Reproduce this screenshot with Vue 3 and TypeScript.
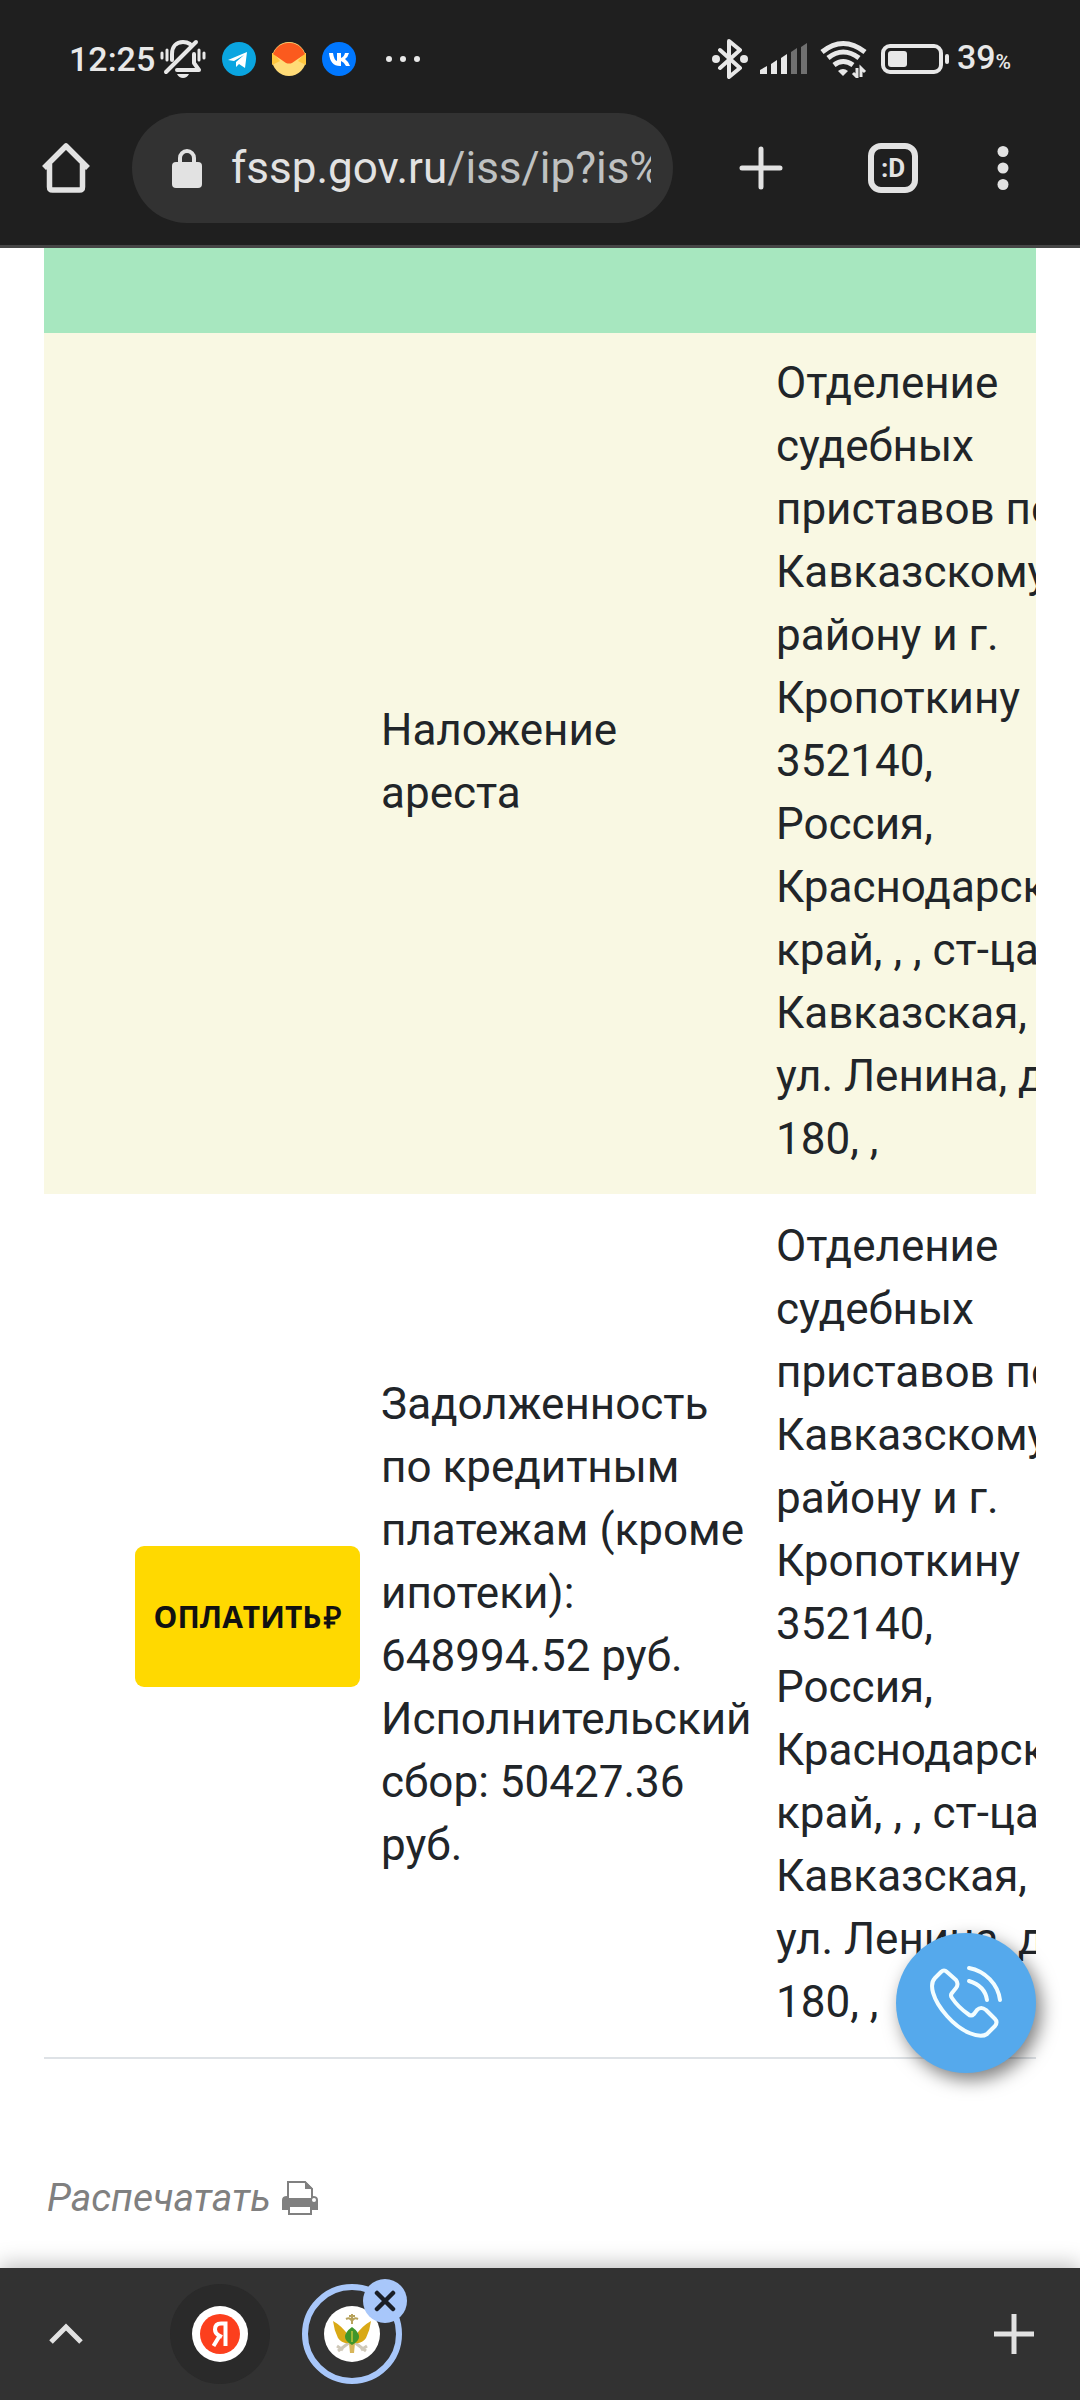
<script setup lang="ts">
interface Row {
  tone: string
  subject: string[]
  payable: boolean
}

const office: string[] = [
  'Отделение',
  'судебных',
  'приставов по',
  'Кавказскому',
  'району и г.',
  'Кропоткину',
  '352140,',
  'Россия,',
  'Краснодарский',
  'край, , , ст-ца',
  'Кавказская,',
  'ул. Ленина, д.',
  '180, ,',
]

const rows: Row[] = [
  { tone: 'cream', subject: ['Наложение', 'ареста'], payable: false },
  {
    tone: 'plain',
    subject: [
      'Задолженность',
      'по кредитным',
      'платежам (кроме',
      'ипотеки):',
      '648994.52 руб.',
      'Исполнительский',
      'сбор: 50427.36',
      'руб.',
    ],
    payable: true,
  },
]
</script>

<template>
  <div class="screen">
    <header class="top">
      <div class="status">
        <span class="clock">12:25</span>
        <svg class="bell" width="46" height="40" viewBox="0 0 46 40" fill="none" stroke="#e8e8e8" stroke-width="4" stroke-linecap="round">
          <path d="M6 33 36 3" />
          <path d="M12 21v-6C12 8 16 3 23 3q4 0 7 2" />
          <path d="M17 31h22l-5-7v-9" stroke-linejoin="round" />
          <path d="M2 14v5M7 11v10M39 11v10M44 14v5" stroke-width="3" />
          <path d="M17 35h12q-2 4-6 4t-6-4z" fill="#e8e8e8" stroke="none" />
        </svg>
        <svg class="app" width="34" height="34" viewBox="0 0 34 34">
          <circle cx="17" cy="17" r="17" fill="#0aa5e0" />
          <path d="M6 18 25 10l-2 16-6-4-3 3v-5l8-7-10 6z" fill="#fff" />
        </svg>
        <svg class="app" width="34" height="34" viewBox="0 0 34 34">
          <circle cx="17" cy="17" r="17" fill="#ffdb77" />
          <path d="M1 11 8 19 0 23V11zM33 11l-7 8 8 4V11z" fill="#ffc63e" />
          <path d="M1 12A17 17 0 0 1 33 12L20 21q-3 1-6 0z" fill="#fb5a1e" />
        </svg>
        <svg class="app" width="34" height="34" viewBox="0 0 34 34">
          <circle cx="17" cy="17" r="17" fill="#07f" />
          <path d="M7 11h4q1 7 4 8v-8h4v5q3-1 4-5h4q-1 4-4 6 3 2 5 7h-4q-2-4-5-5v5h-1Q8 24 7 11z" fill="#fff" />
        </svg>
        <svg class="more" width="36" height="8" viewBox="0 0 36 8" fill="#e8e8e8">
          <circle cx="4" cy="4" r="3" /><circle cx="18" cy="4" r="3" /><circle cx="32" cy="4" r="3" />
        </svg>
        <svg class="push" width="36" height="40" viewBox="0 0 36 40">
          <path d="m8 11 20 18-11 9V2l11 9L8 29" fill="none" stroke="#e8e8e8" stroke-width="4" stroke-linecap="round" stroke-linejoin="round" />
          <circle cx="4" cy="20" r="4" fill="#e8e8e8" /><circle cx="32" cy="20" r="4" fill="#e8e8e8" />
        </svg>
        <svg class="signal" width="48" height="32" viewBox="0 0 48 32">
          <path d="M0 27l7-4v8H0zM11 21l6-4v14h-6zM21 15l6-4v20h-6z" fill="#e8e8e8" />
          <path d="M31 9l6-4v26h-6zM41 4l6-4v31h-6z" fill="#707070" />
        </svg>
        <svg class="wifi" width="47" height="38" viewBox="0 0 47 38" fill="none" stroke="#e8e8e8" stroke-width="5">
          <path d="M2 12Q23-5 45 12M8 18q15-12 31 0M14 25q9-7 19 0" />
          <path d="m18 31q5-4 10 0l-5 5z" fill="#e8e8e8" stroke="none" />
          <path d="M37 28v9l-4-4M41 37v-9l4 4" stroke-width="3" />
        </svg>
        <svg class="battery" width="68" height="32" viewBox="0 0 68 32">
          <rect x="2" y="3" width="58" height="26" rx="7" fill="none" stroke="#e8e8e8" stroke-width="4" />
          <rect x="7" y="8" width="19" height="16" rx="3" fill="#e8e8e8" />
          <rect x="64" y="11" width="4" height="10" rx="2" fill="#e8e8e8" />
        </svg>
        <span class="charge">39<small>%</small></span>
      </div>
      <div class="toolbar">
        <button class="icon home" type="button" aria-label="Home">
          <svg width="50" height="50" viewBox="0 0 50 50" fill="none" stroke="#e2e2e2" stroke-width="5.5" stroke-linejoin="round">
            <path d="M3 25 25 3l22 22M8.500 21v23q0 3 3 3h27q3 0 3-3V21" />
          </svg>
        </button>
        <a class="address" href="#">
          <svg width="30" height="40" viewBox="0 0 30 40">
            <rect y="14" width="30" height="26" rx="4" fill="#e2e2e2" />
            <path d="M8 16V10a7 7 0 0 1 14 0v6" fill="none" stroke="#e2e2e2" stroke-width="4" />
          </svg>
          <span class="url">fssp.gov.ru<span class="path">/iss/ip?is%</span></span>
        </a>
        <button class="icon add" type="button" aria-label="New tab">
          <svg width="44" height="44" viewBox="0 0 44 44" stroke="#e2e2e2" stroke-width="5" stroke-linecap="round">
            <path d="M3 22h38M22 3v38" />
          </svg>
        </button>
        <button class="icon tabs" type="button">:D</button>
        <button class="icon menu" type="button" aria-label="Menu">
          <svg width="12" height="46" viewBox="0 0 12 46" fill="#e2e2e2">
            <circle cx="6" cy="6.500" r="5.500" /><circle cx="6" cy="23" r="5.500" /><circle cx="6" cy="39.500" r="5.500" />
          </svg>
        </button>
      </div>
    </header>

    <main class="page">
      <div class="scroller">
        <div class="band"></div>
        <table>
          <colgroup><col class="c1" /><col class="c2" /><col class="c3" /></colgroup>
          <tbody>
            <tr v-for="row in rows" :key="row.tone" :class="row.tone">
              <td class="pay-cell">
                <button v-if="row.payable" class="pay" type="button">ОПЛАТИТЬ<b>₽</b></button>
              </td>
              <td><div v-for="line in row.subject" :key="line">{{ line }}</div></td>
              <td><div v-for="line in office" :key="line">{{ line }}</div></td>
            </tr>
          </tbody>
        </table>
      </div>
      <a class="print" href="#">
        <span>Распечатать</span>
        <svg width="38" height="36" viewBox="0 0 38 36">
          <path d="M1 20q0-4 5-4h26q5 0 5 4v10H1z" fill="#808080" />
          <path d="M7 18V2h17l7 7v9" fill="#fff" stroke="#808080" stroke-width="2" />
          <path d="M24 1v8h8z" fill="#808080" />
          <path d="M6 18h26v5H6z" fill="#808080" />
          <path d="M8 26h22v8H8z" fill="#fff" stroke="#808080" stroke-width="2" />
          <circle cx="33" cy="20" r="2" fill="#fff" />
        </svg>
      </a>
    </main>

    <nav class="bottom">
      <button class="icon up" type="button" aria-label="Expand">
        <svg width="34" height="22" viewBox="0 0 34 22" fill="none" stroke="#e2e2e2" stroke-width="5">
          <path d="M2 19 17 4l15 15" />
        </svg>
      </button>
      <button class="tab" type="button" aria-label="Yandex">
        <svg width="56" height="56" viewBox="0 0 56 56">
          <circle cx="28" cy="28" r="28" fill="#fff" />
          <circle cx="28" cy="28" r="20" fill="#fc3f1d" />
          <path d="M33.500 40V17.500H29q-6 0-6 6 0 4 4 6l3 1.500M27.500 30 21.500 40" fill="none" stroke="#fff" stroke-width="4" />
        </svg>
      </button>
      <button class="tab current" type="button" aria-label="FSSP">
        <svg width="56" height="56" viewBox="0 0 56 56">
          <circle cx="28" cy="28" r="28" fill="#fff" />
          <path d="M14 45 26 36M42 45 30 36M13 40l6 4M43 40l-6 4" stroke="#cfc8b8" stroke-width="3" />
          <path d="M9 15q9 5 15 14l1 8q-7 1-11-5-4-8-5-17zM47 15q-9 5-15 14l-1 8q7 1 11-5 4-8 5-17z" fill="#d9a916" />
          <path d="M22 13q4-2 6 2 2-4 6-2M28 8v10M25 10h6" fill="none" stroke="#b7a25c" stroke-width="2" />
          <path d="M25 37h6l-1 10h-4z" fill="#d8b65a" />
          <path d="M28 21q7 5 7 10 0 4-7 8-7-4-7-8 0-5 7-10z" fill="#3f962b" />
          <path d="M28 25v11" stroke="#9cb936" stroke-width="2" />
        </svg>
        <span class="close">
          <svg width="22" height="22" viewBox="0 0 22 22" stroke="#1b1f27" stroke-width="4.500" stroke-linecap="round">
            <path d="m3 3 16 16M19 3 3 19" />
          </svg>
        </span>
      </button>
      <button class="icon new" type="button" aria-label="New tab in group">
        <svg width="40" height="40" viewBox="0 0 40 40" stroke="#e2e2e2" stroke-width="5"><path d="M0 20h40M20 0v40" /></svg>
      </button>
    </nav>

    <button class="call" type="button" aria-label="Call">
      <svg width="76" height="76" viewBox="0 0 76 76" fill="none" stroke="#f2fdff" stroke-width="4" stroke-linecap="round" stroke-linejoin="round">
        <path d="M13 7 7 13c-6 6-3 21 12 38s33 23 40 18l8-8q3-4 0-7l-9-9q-5-4-9 0l-3 4q-3 3-6 0Q30 42 24 33q-2-3 0-5l4-5q3-4 0-8l-9-8q-3-3-6 0z" />
        <path d="M41 3C57 6 70 19 72 35M41 16q16 5 18 19" />
      </svg>
    </button>
  </div>
</template>

<style>
body {
  margin: 0;
  background: #fff;
}
</style>

<style scoped>
.screen {
  position: relative;
  display: flex;
  flex-direction: column;
  min-height: 100vh;
  font-family: Roboto, "Liberation Sans", sans-serif;
  color: #212529;
}
button {
  padding: 0;
  border: 0;
  background: none;
  font-family: inherit;
}
svg {
  display: block;
  flex: none;
}
.top {
  background: #1f1f1f;
  border-bottom: 3px solid #464646;
}
.status {
  display: flex;
  align-items: center;
  height: 80px;
  padding: 19px 69px 0 69px;
  color: #e8e8e8;
}
.clock,
.charge {
  font-size: 34px;
  line-height: 40px;
  font-weight: 500;
}
.charge small {
  font-size: 21px;
}
.bell {
  margin-left: 5px;
}
.app {
  margin-left: 16px;
}
.more {
  margin-left: 29px;
}
.push {
  margin-left: auto;
}
.signal,
.wifi {
  margin-left: 12px;
}
.battery {
  margin: 0 8px 0 14px;
}
.toolbar {
  display: flex;
  align-items: center;
  height: 110px;
  padding: 14px 71px 22px 41px;
}
.address {
  flex: 1;
  min-width: 0;
  display: flex;
  align-items: center;
  gap: 29px;
  height: 110px;
  margin: 0 66px 0 41px;
  padding: 0 22px 0 40px;
  box-sizing: border-box;
  border-radius: 55px;
  background: #323232;
  color: #e2e2e2;
  text-decoration: none;
}
.url {
  overflow: hidden;
  white-space: nowrap;
  font-size: 44px;
  line-height: 60px;
}
.path {
  color: #bfc1c1;
}
.tabs {
  width: 50px;
  height: 50px;
  margin: 0 79px 0 85px;
  box-sizing: border-box;
  border: 6px solid #e2e2e2;
  border-radius: 13px;
  color: #e2e2e2;
  font-size: 26px;
  line-height: 34px;
  font-weight: 700;
}
.page {
  flex: 1;
  padding: 0 44px;
}
.scroller {
  overflow: hidden;
}
.band {
  height: 85px;
  background: #a7e7bf;
}
table {
  table-layout: fixed;
  width: 1136px;
  border-collapse: separate;
  border-spacing: 0;
  font-size: 44px;
  line-height: 63px;
}
.c1 {
  width: 316px;
}
.c2 {
  width: 395px;
}
td {
  padding: 19px 21px 23px;
  border-bottom: 2px solid #fff;
  vertical-align: middle;
  white-space: nowrap;
}
.cream {
  background: #f9f8e3;
}
.plain td {
  border-bottom-color: #dee2e6;
}
td.pay-cell {
  padding: 0 0 21px;
}
.pay {
  display: block;
  width: 225px;
  height: 141px;
  margin-left: auto;
  border-radius: 9px;
  background: #ffd900;
  color: #111;
  font-family: "Open Sans", sans-serif;
  font-size: 30px;
  font-weight: 700;
}
.pay b {
  margin-left: 3px;
  font-weight: 800;
}
.print {
  display: flex;
  align-items: center;
  gap: 10px;
  width: max-content;
  margin: 115px 0 0 3px;
  color: #808080;
  text-decoration: none;
  font-size: 39px;
  line-height: 48px;
  font-style: italic;
}
.bottom {
  display: flex;
  align-items: center;
  height: 132px;
  padding: 0 46px 0 49px;
  background: #323232;
  box-shadow: 0 -4px 20px rgba(0, 0, 0, 0.25);
}
.tab {
  position: relative;
  display: flex;
  align-items: center;
  justify-content: center;
  width: 100px;
  height: 100px;
  margin-left: 32px;
  box-sizing: border-box;
  border-radius: 50%;
  background: #2a2a2a;
}
.up + .tab {
  margin-left: 87px;
}
.current {
  border: 6px solid #a8c7fa;
  background: none;
}
.close {
  position: absolute;
  top: -11px;
  right: -11px;
  display: flex;
  align-items: center;
  justify-content: center;
  width: 44px;
  height: 44px;
  border-radius: 50%;
  background: #a8c7fa;
}
.new {
  margin-left: auto;
}
.call {
  position: absolute;
  right: 44px;
  bottom: 327px;
  display: flex;
  align-items: center;
  justify-content: center;
  width: 140px;
  height: 140px;
  border-radius: 50%;
  background: #55a9ec;
  box-shadow: 5px 7px 18px rgba(0, 0, 0, 0.5);
}
</style>
